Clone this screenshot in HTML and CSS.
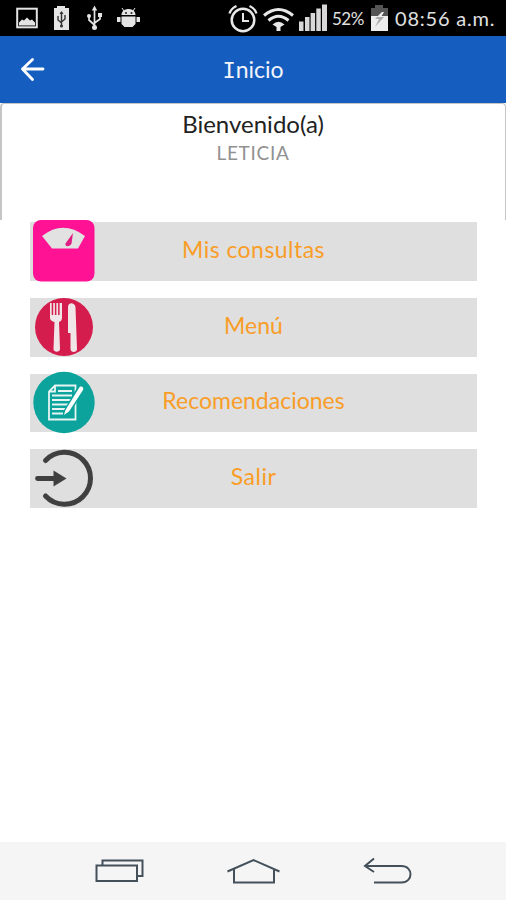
FILE: index.html
```html
<!DOCTYPE html>
<html lang="es">
<head>
<meta charset="utf-8">
<title>Inicio</title>
<link rel="stylesheet" href="styles.css">
</head>
<body>
<div class="status">
  <svg class="status-left" width="160" height="36" viewBox="0 0 160 36" fill="#e4e4e4">
    <rect x="17.200" y="8.700" width="19.600" height="18.600" fill="none" stroke="#e4e4e4" stroke-width="2"/>
    <path d="M19 25.500v-3l3-3 2 1 3-3 3 3 2-1 3 3v3z"/>
    <path d="M57 6h8v2h4v22H54V8h3z"/>
    <path d="M61.500 12v15M58 16v4l3.500 3M65 15v4l-3.500 3" fill="none" stroke="#333" stroke-width="1.400"/>
    <path d="M59.500 14l2-3 2 3z" fill="#333"/><circle cx="61.500" cy="26" r="1.500" fill="#333"/>
    <path d="M94.500 9v19M89 16v4l5.500 5M100 15v4l-5.500 4" fill="none" stroke="#e4e4e4" stroke-width="1.700"/>
    <path d="M91.800 10.500l2.700-5 2.700 5z"/><circle cx="94.500" cy="27.500" r="2.500"/><circle cx="89" cy="16" r="2"/><path d="M98 13h4v4h-4z"/>
    <path d="M121.500 15c0-8 14-8 14 0zM121.500 16.500h14V24l-3 3h-8l-3-3zM117 17h3.500v5H117zM136.500 17h3.500v5h-3.500z"/>
    <path d="M124 11l-2-3M133 11l2-3" stroke="#e4e4e4"/>
    <circle cx="126" cy="13" r="1" fill="#222"/><circle cx="131.500" cy="13" r="1" fill="#222"/>
  </svg>
  <svg width="106" height="36" viewBox="226 0 106 36" fill="none" stroke="#e8e8e8">
    <circle cx="243" cy="20" r="11.300" stroke-width="2.500"/>
    <path d="M243 13v8h6" stroke-width="2"/>
    <path d="M229.500 13.500Q231 8.500 236.500 6M256.500 13.500Q255 8.500 249.500 6" stroke-width="2.300"/>
    <path d="M264 15.500Q278.500 3.500 293 15.500M268.500 20.500Q278.500 12 288.500 20.500" stroke-width="3"/>
    <path d="M272.500 24.500Q278.500 19 284.500 24.500L280.500 27v4h-4v-4z" fill="#e8e8e8" stroke="none"/>
    <g fill="#d8d8d8" stroke="none"><path d="M299 21.500h4.500V31H299zM305 17h4.500v14H305zM310.600 13h4.500v18h-4.500zM316.300 8.500h4.500V31h-4.500zM322 4.500h5V31h-5z"/></g>
  </svg>
  <span class="percent">52%</span>
  <svg width="22" height="36" viewBox="368 0 22 36">
    <path d="M375 5h8v3h5v8h-17V8h4z" fill="#555"/><path d="M371 16h17v15h-17z" fill="#eee"/>
    <path d="M382 12l-7 7h4l-4 8 9-10h-4l4-5z" fill="#aaa"/><path d="M382 12l-5 5h4l3-5z" fill="#eee"/>
  </svg>
  <span class="clock">08:56 a.m.</span>
</div>
<header class="bar">
  <svg class="back" width="26" height="26" viewBox="20 56 26 26" fill="none" stroke="#fff" stroke-width="2.800" stroke-linecap="round" stroke-linejoin="round"><path d="M43 69H22.500M32.500 59.500L22.500 69l10 10.500"/></svg>
  <h1 class="title"><span class="cap-i">I</span>nicio</h1>
</header>
<section class="welcome">
  <p class="greeting">Bienvenido(a)</p>
  <p class="name">LETICIA</p>
</section>
<main class="menu">
  <div class="item">
    <svg class="icon" viewBox="30 219 68 64"><rect x="33" y="220" width="61.500" height="61.500" rx="8" fill="#ff1294"/><path d="M42 236q21-16.500 43 0l-7 12.500H52z" fill="#e2e2e2"/><path d="M73 233l-1.500 10.500c-2 4-7 3-6 0z" fill="#df1d84"/></svg>
    <span class="label consultas">Mis consultas</span>
  </div>
  <div class="item">
    <svg class="icon" viewBox="30 295 68 64"><circle cx="64" cy="327" r="29" fill="#d41c4d"/><path d="M50 303h1.700v12h1.500v-12h1.700v12h1.500v-12h1.700v12h1.500v-12H62v15c0 2.500-1.500 3.500-3 4l1 27c0 3.500-6.500 3.500-6.500 0l1-27c-2.500-.5-4.500-2-4.500-4z" fill="#f0e6e7"/><path d="M68 307c0-5 6.500-5 7.500 0l1.500 42c0 4-6.500 4-6.500 0v-16H68z" fill="#f0e6e7"/></svg>
    <span class="label">Menú</span>
  </div>
  <div class="item">
    <svg class="icon" viewBox="30 371 68 64"><circle cx="64" cy="402.500" r="30.700" fill="#0ba39b"/><g fill="none" stroke="#e6f5f3" stroke-width="1.800"><path d="M55 385.500h20.500v34H49v-28zM55 385.500v6h-6"/><path d="M58 391h14M52 395.500h20M52 400h19M52 404.500h16M52 409h13M52 413.500h11"/></g><path d="M66 413.500L81 388" stroke="#0ba39b" stroke-width="7"/><path d="M64 415l1.500-5L79 388c1.500-3 5.500-1 4 2l-14 21.500z" fill="#fff"/></svg>
    <span class="label">Recomendaciones</span>
  </div>
  <div class="item">
    <svg class="icon" viewBox="30 447 68 64"><path d="M45.500 460.500a26 26 0 1 1 0 35.500" fill="none" stroke="#404040" stroke-width="5" stroke-linecap="round"/><path d="M37.500 478.500H56" stroke="#404040" stroke-width="4.800" stroke-linecap="round"/><path d="M53.500 470.500L66.500 478.500l-13 8z" fill="#404040"/></svg>
    <span class="label salir">Salir</span>
  </div>
</main>
<nav class="nav">
  <svg width="50" height="28" viewBox="95 857 50 28" fill="none" stroke="#44515b" stroke-width="2"><path d="M102.500 865v-4.500h40V876H138"/><path d="M96.500 865.500h40.500V881H96.500z"/></svg>
  <svg width="56" height="28" viewBox="226 857 56 28" fill="none" stroke="#44515b" stroke-width="2"><path d="M227.500 871.500L253.500 860l26 11.500M234 869v13.500h40V869"/></svg>
  <svg width="50" height="28" viewBox="363 857 50 28" fill="none" stroke="#44515b" stroke-width="2"><path d="M374 858.500l-9 7.500 9 6M365 866h36.500c12 0 12 16.500 0 16.500H374"/></svg>
</nav>
</body>
</html>
```

FILE: styles.css
```css
* { box-sizing: border-box; }
body {
  margin: 0;
  height: 900px;
  display: flex;
  flex-direction: column;
  overflow: hidden;
  background: #fff;
  font-family: Lato, "Liberation Sans", sans-serif;
}
h1, p { margin: 0; font-weight: 400; }
svg { display: block; flex: none; }
.status {
  height: 36px;
  display: flex;
  align-items: center;
  background: #000;
  color: #e0e0e0;
  white-space: nowrap;
}
.status-left { margin-right: 66px; }
.percent { width: 36px; font-size: 17px; letter-spacing: -0.5px; }
.clock { margin-left: 5px; font-size: 20px; letter-spacing: 0.8px; }
.bar {
  height: 67px;
  display: grid;
  grid-template-columns: 60px 1fr 60px;
  align-items: center;
  background: #165dc0;
  color: #f2f5fa;
}
.back { margin: -2px 0 0 20px; }
.title { text-align: center; font-size: 23px; line-height: 30px; }
.cap-i { font-family: "DejaVu Sans Mono", monospace; font-size: 0.96em; }
.welcome {
  height: 117px;
  padding: 5px 1px 0 0;
  border: solid #c5c5c5;
  border-width: 1px 1px 0 2px;
  border-radius: 4px 4px 0 0;
  text-align: center;
}
.greeting { font-size: 24px; line-height: 30px; color: #222; }
.name { font-size: 19px; line-height: 27px; letter-spacing: 0.7px; color: #919191; }
.menu {
  flex: 1;
  display: flex;
  flex-direction: column;
  gap: 17px;
  padding: 2px 29px 0 30px;
}
.item {
  height: 58.8px;
  display: grid;
  grid-template-columns: 68px 1fr 68px;
  align-items: center;
  background: #dfdfdf;
}
.icon { width: 68px; height: 64px; margin: -3px 0; }
.label { text-align: center; font-size: 23px; line-height: 28px; padding-bottom: 5px; color: #f99d27; white-space: nowrap; }
.consultas { letter-spacing: 0.45px; }
.salir { letter-spacing: 0.5px; }
.nav {
  height: 58px;
  padding: 0 93px 0 95px;
  display: flex;
  align-items: center;
  justify-content: space-between;
  background: #f5f5f5;
}
```
